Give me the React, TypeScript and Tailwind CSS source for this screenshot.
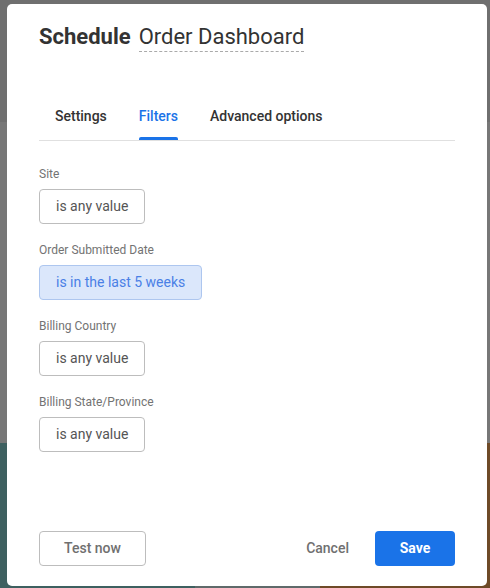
import React from 'react'

const filters = [
  { label: 'Site', value: 'is any value', active: false },
  { label: 'Order Submitted Date', value: 'is in the last 5 weeks', active: true },
  { label: 'Billing Country', value: 'is any value', active: false },
  { label: 'Billing State/Province', value: 'is any value', active: false },
]

export default function App() {
  return (
    <div
      className="relative w-[490px] h-[588px] overflow-hidden"
      style={{ fontFamily: 'Roboto, "Liberation Sans", sans-serif' }}
    >
      {/* backdrop */}
      <div className="flex flex-col h-full">
        <div className="h-[122px] bg-[#6f6f6f]" />
        <div className="h-[321px] bg-[#777777]" />
        <div className="flex-1 flex">
          <div className="w-[195px] bg-[#3e6060]" />
          <div className="w-[125px] bg-[#5f6a6a]" />
          <div className="flex-1 bg-[#6e4a27]" />
        </div>
      </div>

      {/* dialog */}
      <div className="absolute left-[7px] top-[4px] w-[480px] h-[582px] bg-white rounded-[5px] flex flex-col px-[32px]">
        <div className="flex items-baseline gap-[8px] pt-[16px]">
          <span className="text-[22px] font-bold text-[#333]">Schedule</span>
          <span className="text-[22px] text-[#333] border-b border-dashed border-[#aaa] leading-[28px]">
            Order Dashboard
          </span>
        </div>

        <div className="mt-[51px] flex border-b border-[#e0e0e0] w-[416px] pl-[16px] gap-[32px]">
          <Tab label="Settings" />
          <Tab label="Filters" active />
          <Tab label="Advanced options" />
        </div>

        <div className="flex flex-col gap-[18px] mt-[25px]">
          {filters.map(f => (
            <div key={f.label} className="flex flex-col items-start">
              <span className="text-[12px] leading-[16px] text-[#737373]">{f.label}</span>
              <button
                className={`mt-[7px] h-[35px] px-[16px] rounded-[4px] border text-[14px] ${
                  f.active
                    ? 'bg-[#dbe7fb] border-[#adc6ef] text-[#4a80e6]'
                    : 'bg-white border-[#bdbdbd] text-[#555]'
                }`}
              >
                {f.value}
              </button>
            </div>
          ))}
        </div>

        <div className="mt-auto mb-[20px] flex items-center">
          <button className="h-[35px] w-[107px] rounded-[4px] border border-[#bdbdbd] text-[14px] font-medium text-[#707070]">
            Test now
          </button>
          <button className="ml-auto mr-[26px] text-[14px] font-medium text-[#707070]">
            Cancel
          </button>
          <button className="h-[35px] w-[80px] rounded-[4px] bg-[#1a73e8] text-[14px] font-bold text-white">
            Save
          </button>
        </div>
      </div>
    </div>
  )
}

function Tab({ label, active }: { label: string; active?: boolean }) {
  return (
    <div className="flex flex-col items-center">
      <span
        className={`text-[14px] font-medium leading-[20px] pt-[2px] ${
          active ? 'text-[#1a73e8]' : 'text-[#333]'
        }`}
      >
        {label}
      </span>
      <div className={`mt-[11px] h-[3px] w-full rounded-t-[2px] ${active ? 'bg-[#1a73e8]' : ''}`} />
    </div>
  )
}
